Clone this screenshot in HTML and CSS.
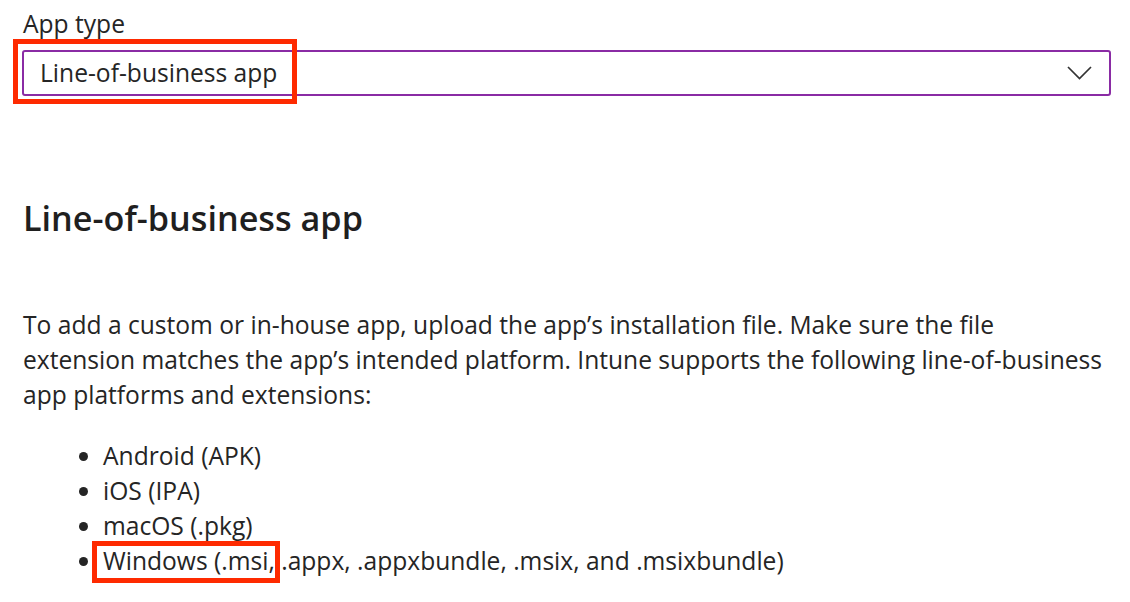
FILE: index.html
```html
<!DOCTYPE html>
<html lang="en">
<head>
<meta charset="utf-8">
<title>Line-of-business app</title>
<link rel="stylesheet" href="styles.css">
</head>
<body>
<main class="page">
  <div class="field">
    <label class="field-label">App type</label>
    <div class="select">
      <span class="select-value">Line-of-business app</span>
      <svg class="chevron" width="25" height="14" viewBox="0 0 25 14" aria-hidden="true">
        <polyline points="1,1 12.5,12.5 24,1" fill="none" stroke="#333" stroke-width="1.7"/>
      </svg>
      <div class="callout"></div>
    </div>
  </div>

  <h2 class="title">Line-of-business app</h2>

  <p class="intro">To add a custom or in-house app, upload the app’s installation file. Make sure the file<br>extension matches the app’s intended platform. Intune supports the following line-of-business<br>app platforms and extensions:</p>

  <ul class="platforms">
    <li>Android (APK)</li>
    <li>iOS (IPA)</li>
    <li>macOS (.pkg)</li>
    <li><span class="mark">Windows (.msi,</span> .appx, .appxbundle, .msix, and .msixbundle)</li>
  </ul>
</main>
</body>
</html>
```
FILE: styles.css
```css
html, body {
  margin: 0;
  padding: 0;
  background: #ffffff;
}

body {
  font-family: "Open Sans", "Noto Sans", sans-serif;
  color: #252525;
  font-size: 24.6px;
}

.page {
  width: 1089px;
  padding: 6.5px 0 24px 22px;
}

.field {
  display: flex;
  flex-direction: column;
}

.field-label {
  line-height: 34px;
  margin-left: 1px;
}

.select {
  position: relative;
  margin-top: 9px;
  height: 42px;
  border: 2px solid #8a2ba4;
  border-radius: 3px;
  display: flex;
  align-items: center;
  justify-content: space-between;
  padding: 0 17px 0 16px;
}

.select-value {
  line-height: 42px;
}

.chevron {
  display: block;
  margin-top: 1px;
}

.callout {
  position: absolute;
  left: -11px;
  top: -12.5px;
  width: 284px;
  height: 65px;
  border: 5px solid #fe2a00;
  box-sizing: border-box;
  pointer-events: none;
}

.title {
  margin: 99.7px 0 0 1px;
  font-size: 34.2px;
  line-height: 46px;
  font-weight: 600;
  color: #1f1f1f;
}

.intro {
  margin: 66.3px 0 0 1px;
  line-height: 35px;
}

.platforms {
  margin: 26px 0 0 0;
  padding-left: 81px;
  line-height: 35px;
}

.mark {
  display: inline-block;
  line-height: 29px;
  padding: 0 0 2.5px 5.7px;
  margin-left: -5.7px;
  outline: 5px solid #fe2a00;
  outline-offset: 0;
}
```
